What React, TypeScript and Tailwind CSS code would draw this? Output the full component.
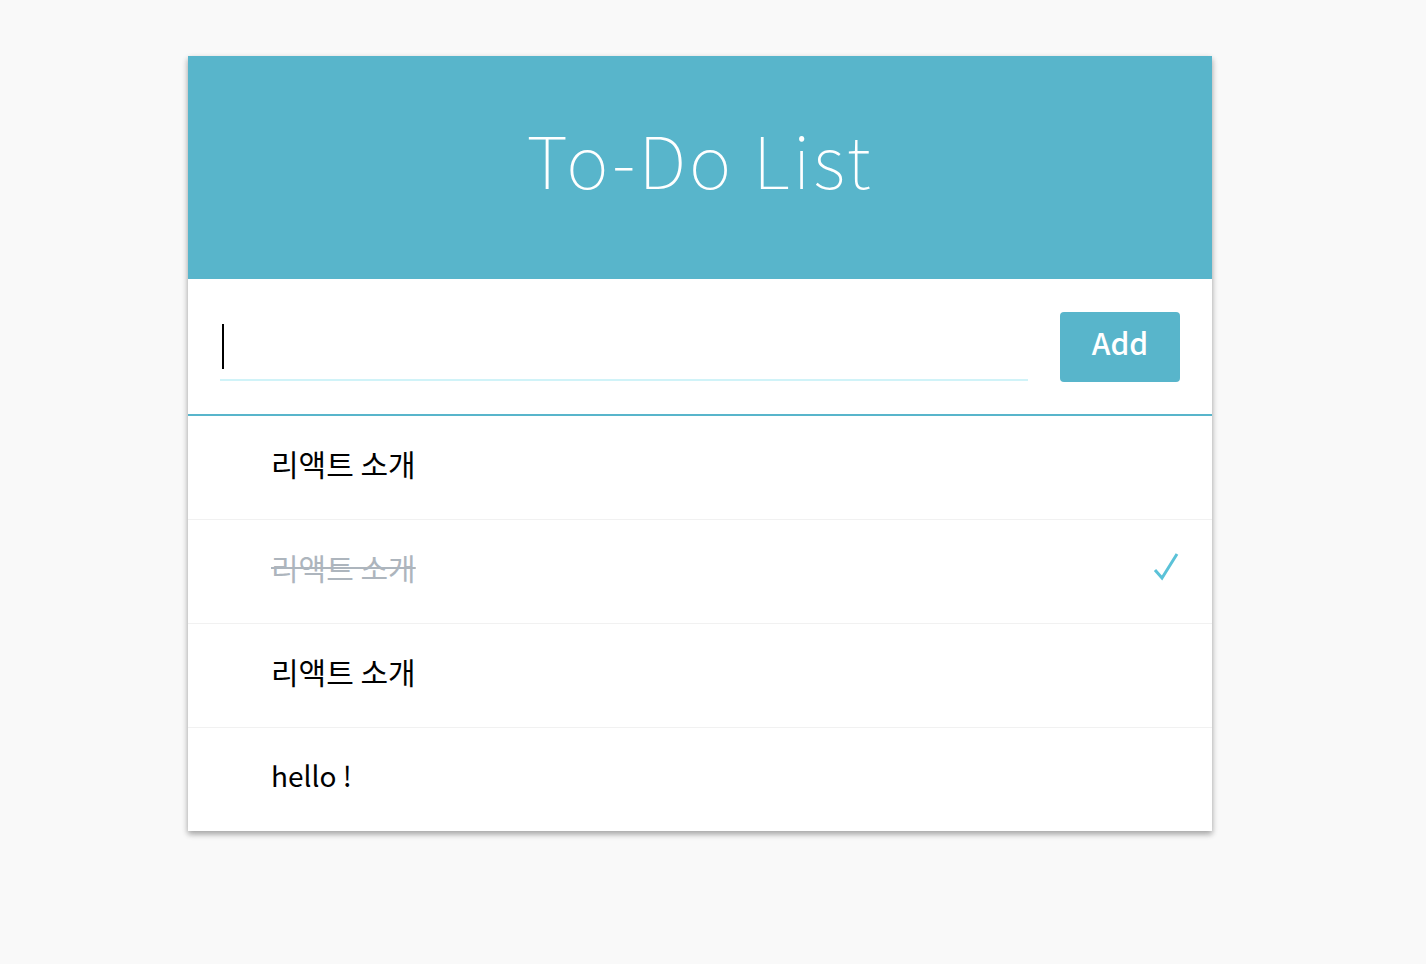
import React from "react";

const items = [
  { text: "리액트 소개", done: false, latin: false },
  { text: "리액트 소개", done: true, latin: false },
  { text: "리액트 소개", done: false, latin: false },
  { text: "hello !", done: false, latin: true },
];

export default function App() {
  return (
    <div
      className="min-h-[964px] w-full bg-[#f9f9f9] pt-[56px]"
      style={{ fontFamily: '"Noto Sans CJK KR", "Noto Sans", sans-serif' }}
    >
      <div className="ml-[188px] w-[1024px] bg-white shadow-[0_3px_6px_rgba(0,0,0,0.16),0_3px_6px_rgba(0,0,0,0.23)]">
        <div className="flex h-[223px] items-center justify-center bg-[#58b5cb] pb-[20px]">
          <h1 className="text-[72px] font-thin leading-none tracking-[3px] text-white">To-Do List</h1>
        </div>
        <div className="flex items-start border-b-2 border-[#58b5cb] px-[32px] pt-[33px] pb-[32px]">
          <div className="relative h-[69px] flex-1 border-b-2 border-[#d0f3f8]">
            <div className="absolute left-[2px] top-[12px] h-[45px] w-[2px] bg-black" />
          </div>
          <button className="ml-[32px] h-[70px] w-[120px] rounded-[4px] bg-[#58b5cb] pb-[10px] text-[30px] font-medium leading-none text-white">
            Add
          </button>
        </div>
        <div>
          {items.map((item, i) => (
            <div
              key={i}
              className={`flex items-center justify-between pb-[10px] pl-[83px] pr-[33px] ${
                i < items.length - 1 ? "h-[104px] border-b border-[#f1f1f1]" : "h-[103px]"
              }`}
            >
              <span
                className={`${item.latin ? "text-[28px]" : "text-[30px]"} leading-none ${
                  item.done ? "text-[#adb5bd] line-through decoration-[#adb5bd] decoration-2" : "text-black"
                }`}
              >
                {item.text}
              </span>
              {item.done && (
                <svg width="26" height="30" viewBox="0 0 26 30" fill="none" className="-mt-[2px]">
                  <path d="M2 19 L9 27 L24 3" stroke="#5bc2d8" strokeWidth="3" strokeLinecap="butt" strokeLinejoin="miter" />
                </svg>
              )}
            </div>
          ))}
        </div>
      </div>
    </div>
  );
}
